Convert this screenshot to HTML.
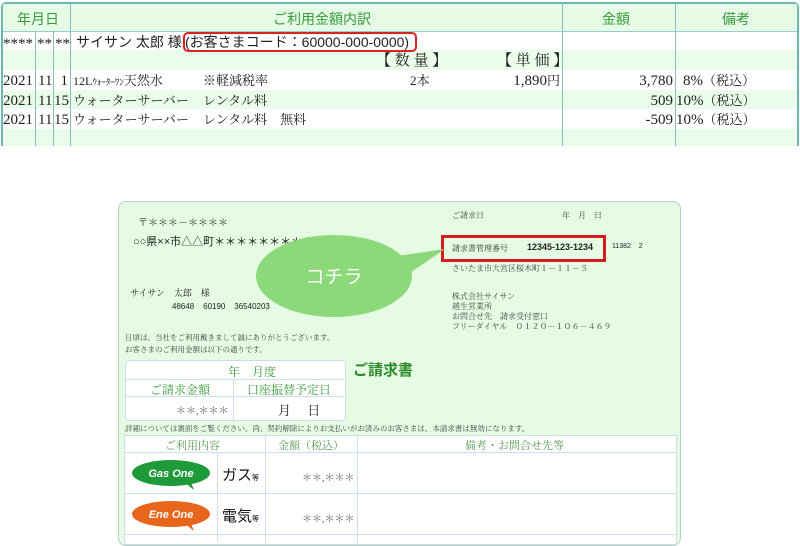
<!DOCTYPE html>
<html><head><meta charset="utf-8"><style>
*{margin:0;padding:0;box-sizing:border-box}
body{width:800px;height:538px;background:#fff;position:relative;overflow:hidden;font-family:"Liberation Serif","Noto Serif CJK JP",serif;color:#222}
.a{position:absolute;white-space:nowrap}
.r{text-align:right}
.g{color:#3a9a3a}
.s{font-family:"Liberation Sans","Noto Sans CJK JP",sans-serif}
.t{font-size:15px;line-height:18px}
.j{font-size:13px;line-height:18px}
</style></head><body>
<!-- top table -->
<div class="a" style="left:1px;top:2px;width:798px;height:144px;border:2px solid #6bb8b0;border-bottom:none;border-radius:5px 5px 0 0;background:#fff"></div>
<div class="a" style="left:3px;top:4px;width:794px;height:27px;background:#e6fbe6"></div>
<div class="a" style="left:3px;top:50px;width:794px;height:20px;background:#eafcea"></div>
<div class="a" style="left:3px;top:90px;width:794px;height:19px;background:#eafcea"></div>
<div class="a" style="left:3px;top:129px;width:794px;height:17px;background:#eafcea"></div>
<div class="a" style="left:3px;top:31px;width:794px;height:1px;background:#9cc"></div>
<div class="a" style="left:35px;top:31px;width:1px;height:115px;background:#8bb"></div>
<div class="a" style="left:53px;top:31px;width:1px;height:115px;background:#8bb"></div>
<div class="a" style="left:70px;top:4px;width:1px;height:142px;background:#8bb"></div>
<div class="a" style="left:562px;top:4px;width:1px;height:142px;background:#8bb"></div>
<div class="a" style="left:675px;top:4px;width:1px;height:142px;background:#8bb"></div>
<div class="a g s" style="left:17px;top:9px;font-size:14px">年月日</div>
<div class="a g s" style="left:273px;top:9px;font-size:14px">ご利用金額内訳</div>
<div class="a g s" style="left:602px;top:9px;font-size:14px">金額</div>
<div class="a g s" style="left:722px;top:9px;font-size:14px">備考</div>
<div class="a t" style="left:3px;top:35px">****</div>
<div class="a t" style="left:37px;top:35px">**</div>
<div class="a t" style="left:55px;top:35px">**</div>
<div class="a s" style="left:76px;top:33px;font-size:14px;line-height:18px">サイサン 太郎 様</div>
<div class="a" style="left:183px;top:32px;width:234px;height:20px;border:2px solid #d22;border-radius:5px"></div>
<div class="a s" style="left:185px;top:33px;font-size:14px;line-height:18px">(お客さまコード：60000-000-0000)</div>
<div class="a t" style="left:376px;top:52px">【 数 量 】</div>
<div class="a t" style="left:497px;top:52px">【 単 価 】</div>
<div class="a t" style="left:3px;top:72px">2021</div><div class="a t" style="left:38px;top:72px">11</div><div class="a t r" style="left:54px;top:72px;width:14px">1</div>
<div class="a j" style="left:73px;top:72px"><span style="font-size:12px">12L</span><span style="font-size:9px">ｳｫｰﾀｰﾜﾝ</span>天然水</div>
<div class="a j" style="left:203px;top:72px">※軽減税率</div>
<div class="a j" style="left:410px;top:72px">2本</div>
<div class="a t r" style="left:480px;top:72px;width:80px">1,890<span style="font-size:13px">円</span></div>
<div class="a t r" style="left:580px;top:72px;width:93px">3,780</div>
<div class="a t" style="left:683px;top:72px">8%<span style="font-size:13px">（税込）</span></div>
<div class="a t" style="left:3px;top:92px">2021</div><div class="a t" style="left:38px;top:92px">11</div><div class="a t" style="left:54px;top:92px">15</div>
<div class="a j" style="left:73px;top:92px">ウォーターサーバー</div><div class="a j" style="left:203px;top:92px">レンタル料</div>
<div class="a t r" style="left:580px;top:92px;width:93px">509</div>
<div class="a t" style="left:676px;top:92px">10%<span style="font-size:13px">（税込）</span></div>
<div class="a t" style="left:3px;top:111px">2021</div><div class="a t" style="left:38px;top:111px">11</div><div class="a t" style="left:54px;top:111px">15</div>
<div class="a j" style="left:73px;top:111px">ウォーターサーバー</div><div class="a j" style="left:203px;top:111px">レンタル料　無料</div>
<div class="a t r" style="left:580px;top:111px;width:93px">-509</div>
<div class="a t" style="left:676px;top:111px">10%<span style="font-size:13px">（税込）</span></div>

<!-- invoice panel -->
<div class="a" style="left:118px;top:201px;width:563px;height:345px;background:#e5fbe3;border:1px solid #b5cfc0;border-radius:8px"></div>
<div class="a" style="left:138px;top:214px;font-size:10px">〒＊＊＊－＊＊＊＊</div>
<div class="a s" style="left:133px;top:233px;font-size:11px">○○県××市△△町＊＊＊＊＊＊＊＊＊</div>
<div class="a" style="left:130px;top:286px;font-size:9px">サイサン　太郎　様</div>
<div class="a s" style="left:172px;top:302px;font-size:8px">48648&nbsp;&nbsp;&nbsp;&nbsp;60190&nbsp;&nbsp;&nbsp;&nbsp;36540203</div>
<div class="a" style="left:125px;top:332px;font-size:7.5px;line-height:12px;color:#444">日頃は、当社をご利用戴きまして誠にありがとうございます。<br>お客さまのご利用金額は以下の通りです。</div>
<div class="a" style="left:452px;top:210px;font-size:8px;color:#444">ご請求日</div>
<div class="a" style="left:562px;top:210px;font-size:8px;color:#444">年　月　日</div>
<div class="a" style="left:452px;top:243px;font-size:8px;color:#333">請求書管理番号</div>
<div class="a s" style="left:527px;top:242px;font-size:9px;font-weight:bold">12345-123-1234</div>
<div class="a s" style="left:612px;top:243px;font-size:7px">11382&nbsp;&nbsp;&nbsp;&nbsp;2</div>
<div class="a" style="left:441px;top:235px;width:165px;height:27px;border:3px solid #d41c1c"></div>
<div class="a" style="left:452px;top:263px;font-size:8px;color:#444">さいたま市大宮区桜木町１－１１－５</div>
<div class="a" style="left:452px;top:292px;font-size:8px;line-height:10px;color:#444">株式会社サイサン<br>越生営業所<br>お問合せ先　請求受付窓口<br>フリーダイヤル　０１２０－１０６－４６９</div>
<svg class="a" style="left:250px;top:225px" width="200" height="100"><path d="M140 32 L195 24 L145 58 Z" fill="#8cd97a"/><ellipse cx="84" cy="51" rx="78" ry="41" fill="#8cd97a"/><text x="84" y="58" text-anchor="middle" font-family="Liberation Sans,Noto Sans CJK JP,sans-serif" font-size="19" fill="#fff">コチラ</text></svg>
<!-- small table -->
<div class="a" style="left:125px;top:360px;width:221px;height:61px;background:#fff;border:1px solid #cde;border-radius:4px"></div>
<div class="a" style="left:125px;top:379px;width:221px;height:1px;background:#cde"></div>
<div class="a" style="left:125px;top:396px;width:221px;height:1px;background:#cde"></div>
<div class="a" style="left:233px;top:379px;width:1px;height:42px;background:#cde"></div>
<div class="a g" style="left:228px;top:363px;font-size:12px">年　月度</div>
<div class="a g" style="left:150px;top:381px;font-size:12px">ご請求金額</div>
<div class="a g" style="left:247px;top:381px;font-size:12px">口座振替予定日</div>
<div class="a" style="left:176px;top:402px;font-size:10px;color:#555">＊＊,＊＊＊</div>
<div class="a" style="left:278px;top:400px;font-size:13px">月　 日</div>
<div class="a s g" style="left:353px;top:359px;font-size:15px;font-weight:bold;color:#2a8a2a">ご請求書</div>
<div class="a" style="left:125px;top:423px;font-size:7.5px;color:#444">詳細については裏面をご覧ください。尚、契約解除によりお支払いがお済みのお客さまは、本請求書は無効になります。</div>
<!-- lower table -->
<div class="a" style="left:124px;top:435px;width:553px;height:110px;background:#fff;border:1px solid #cde"></div>
<div class="a" style="left:124px;top:452px;width:553px;height:1px;background:#cde"></div>
<div class="a" style="left:124px;top:493px;width:553px;height:1px;background:#cde"></div>
<div class="a" style="left:124px;top:534px;width:553px;height:1px;background:#cde"></div>
<div class="a" style="left:217px;top:452px;width:1px;height:90px;background:#cde"></div>
<div class="a" style="left:265px;top:435px;width:1px;height:110px;background:#cde"></div>
<div class="a" style="left:357px;top:435px;width:1px;height:110px;background:#cde"></div>
<div class="a g" style="left:165px;top:437px;font-size:11px;color:#5a9a5a">ご利用内容</div>
<div class="a g" style="left:278px;top:437px;font-size:11px;color:#5a9a5a">金額（税込）</div>
<div class="a g" style="left:465px;top:437px;font-size:11px;color:#5a9a5a">備考・お問合せ先等</div>
<svg class="a" style="left:130px;top:458px" width="84" height="34"><path d="M54 24 L64 32 L60 22Z" fill="#1f9a3a"/><ellipse cx="41" cy="15" rx="39" ry="13" fill="#1f9a3a"/><text x="41" y="19" text-anchor="middle" font-family="Liberation Sans,sans-serif" font-size="11" font-weight="bold" font-style="italic" fill="#fff">Gas One</text></svg>
<svg class="a" style="left:130px;top:499px" width="84" height="34"><path d="M54 24 L64 32 L60 22Z" fill="#e8661c"/><ellipse cx="41" cy="15" rx="39" ry="13" fill="#e8661c"/><text x="41" y="19" text-anchor="middle" font-family="Liberation Sans,sans-serif" font-size="11" font-weight="bold" font-style="italic" fill="#fff">Ene One</text></svg>
<div class="a s" style="left:222px;top:464px;font-size:15px;color:#111">ガス<span style="font-size:7px">等</span></div>
<div class="a s" style="left:222px;top:505px;font-size:15px;color:#111">電気<span style="font-size:7px">等</span></div>
<div class="a" style="left:302px;top:469px;font-size:10px;color:#555">＊＊,＊＊＊</div>
<div class="a" style="left:302px;top:510px;font-size:10px;color:#555">＊＊,＊＊＊</div>
</body></html>
